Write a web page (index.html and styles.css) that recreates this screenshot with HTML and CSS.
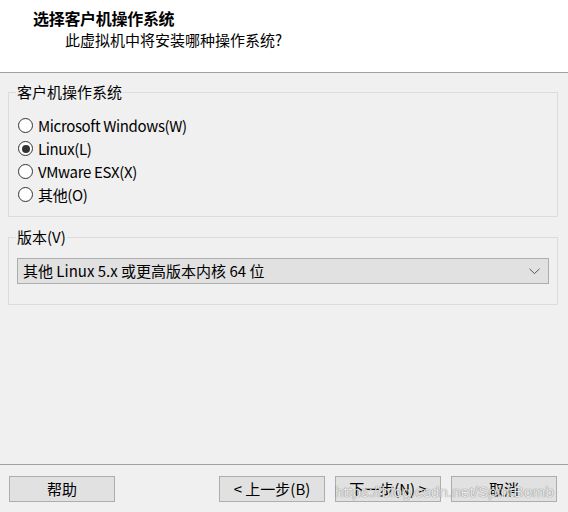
FILE: index.html
```html
<!DOCTYPE html>
<html lang="zh-CN">
<head>
<meta charset="utf-8">
<title>新建虚拟机向导</title>
<link rel="stylesheet" href="styles.css">
</head>
<body>
<div class="wizard">
  <header class="head">
    <div class="title">选择客户机操作系统</div>
    <div class="subtitle">此虚拟机中将安装哪种操作系统?</div>
  </header>
  <main class="body">
    <fieldset class="group group-os">
      <legend class="legend">客户机操作系统</legend>
      <div class="radios">
        <div class="radio-row"><span class="radio"></span><span class="radio-label">Microsoft Windows(W)</span></div>
        <div class="radio-row"><span class="radio checked"></span><span class="radio-label">Linux(L)</span></div>
        <div class="radio-row"><span class="radio"></span><span class="radio-label">VMware ESX(X)</span></div>
        <div class="radio-row"><span class="radio"></span><span class="radio-label">其他(O)</span></div>
      </div>
    </fieldset>
    <fieldset class="group group-ver">
      <legend class="legend">版本(V)</legend>
      <div class="combo">
        <span class="combo-text">其他 Linux 5.x 或更高版本内核 64 位</span>
        <svg class="chevron" width="11" height="7" viewBox="0 0 11 7"><path d="M0.5 0.8 L5.5 5.6 L10.5 0.8" fill="none" stroke="#555" stroke-width="1"/></svg>
      </div>
    </fieldset>
  </main>
  <footer class="foot">
    <button class="btn">帮助</button>
    <div class="spacer"></div>
    <button class="btn">&lt; 上一步(B)</button>
    <button class="btn">下一步(N) &gt;</button>
    <button class="btn">取消</button>
    <div class="watermark">https://blog.csdn.net/SpiritBomb</div>
  </footer>
</div>
</body>
</html>
```

FILE: styles.css
```css
* { box-sizing: border-box; }
html, body {
  margin: 0;
  padding: 0;
}
body {
  background: #f0f0f0;
  font-family: "Noto Sans CJK SC", "Noto Sans", sans-serif;
  font-size: 15px;
  color: #000;
}
.wizard {
  width: 568px;
  height: 512px;
  display: flex;
  flex-direction: column;
  position: relative;
}
.head {
  background: #fff;
  height: 73px;
  border-bottom: 1px solid #a0a0a0;
  padding-top: 8px;
}
.title {
  font-weight: bold;
  font-size: 16px;
  line-height: 20px;
  padding-left: 33px;
  letter-spacing: -0.3px;
}
.subtitle {
  line-height: 20px;
  padding-left: 65px;
  margin-top: 2px;
}
.body {
  flex: 1;
  padding: 9px 10px 0 8px;
}
.group {
  border: 1px solid #dcdcdc;
  margin: 0;
  padding: 0;
  min-width: 0;
}
.group-ver {
  margin-top: 10px;
}
.legend {
  margin-left: 7px;
  padding: 0 1px;
  line-height: 20px;
}
.radios {
  padding: 12px 0 10px 9px;
}
.radio-row {
  display: flex;
  align-items: center;
  height: 23px;
}
.radio {
  width: 15px;
  height: 15px;
  border: 1px solid #333;
  border-radius: 50%;
  background: #fff;
  display: flex;
  align-items: center;
  justify-content: center;
  flex: none;
}
.radio.checked::after {
  content: "";
  width: 8px;
  height: 8px;
  border-radius: 50%;
  background: #333;
}
.radio-label {
  margin-left: 5px;
  line-height: 20px;
  letter-spacing: -0.35px;
}
.combo {
  margin: 11px 8px 20px 8px;
  height: 26px;
  background: #e1e1e1;
  border: 1px solid #adadad;
  display: flex;
  align-items: center;
  padding: 0 8px 0 5px;
}
.combo-text {
  flex: 1;
  line-height: 20px;
}
.chevron {
  display: block;
}
.foot {
  height: 48px;
  border-top: 1px solid #a0a0a0;
  display: flex;
  align-items: flex-start;
  padding: 11px 11px 0 9px;
  gap: 10px;
  position: relative;
}
.spacer {
  flex: 1;
}
.btn {
  width: 106px;
  height: 26px;
  background: #e1e1e1;
  border: 1px solid #adadad;
  font-family: "Noto Sans CJK SC", "Noto Sans", sans-serif;
  font-size: 15px;
  color: #000;
  padding: 0;
  line-height: 20px;
}
.watermark {
  position: absolute;
  left: 335px;
  top: 18px;
  font-family: "Liberation Sans", Arial, sans-serif;
  font-size: 15.5px;
  line-height: 18px;
  color: rgba(255, 255, 255, 0.85);
  text-shadow: 0 0 1px rgba(0, 0, 0, 0.45), 0 0 1px rgba(0, 0, 0, 0.25);
  pointer-events: none;
  white-space: nowrap;
}
```
